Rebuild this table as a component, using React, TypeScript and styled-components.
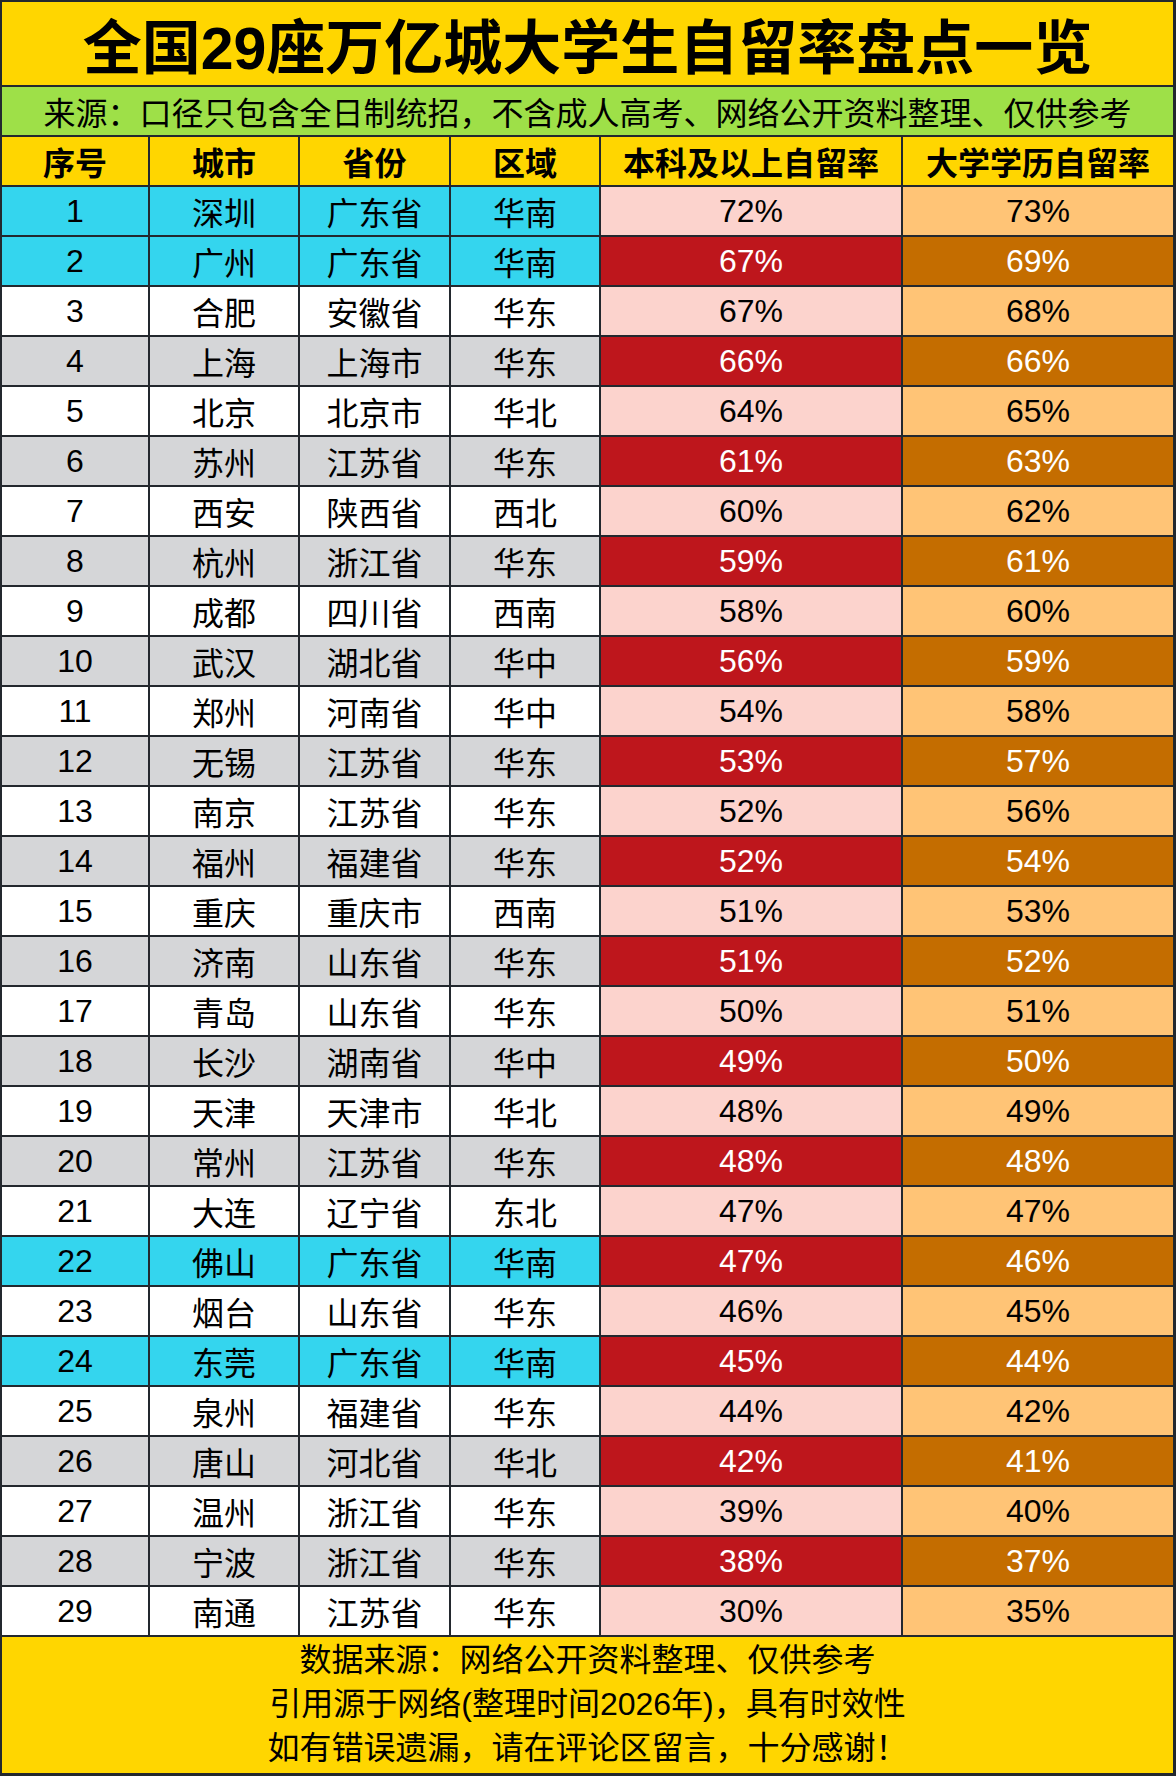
import React from "react";
import styled, { createGlobalStyle } from "styled-components";

const Global = createGlobalStyle`
  html, body { margin: 0; padding: 0; background: #ffffff; }
  body { font-family: "Liberation Sans", "Noto Sans CJK SC", sans-serif; }
`;

const LINE = "#23282e";

const Sheet = styled.div`
  width: 1176px;
  height: 1776px;
  box-sizing: border-box;
  background: ${LINE};
  padding: 2px 3px 3px 2px;
  display: grid;
  grid-template-columns: 146px 148px 149px 148px 300px 1fr;
  grid-template-rows: 83px 48px 48px repeat(29, 48px) 136px;
  column-gap: 2px;
  row-gap: 2px;
  font-family: "Liberation Sans", "Noto Sans CJK SC", sans-serif;
`;

const Title = styled.div`
  grid-column: 1 / -1;
  background: #ffd600;
  display: flex;
  align-items: center;
  justify-content: center;
  font-size: 59px;
  font-weight: 700;
  color: #000;
`;

const Subtitle = styled.div`
  grid-column: 1 / -1;
  background: #9ee048;
  display: flex;
  align-items: center;
  justify-content: center;
  font-size: 32px;
  color: #000;
`;

const Head = styled.div`
  background: #ffd600;
  display: flex;
  align-items: center;
  justify-content: center;
  font-size: 32px;
  font-weight: 700;
  color: #000;
`;

type Tone = "white" | "grey" | "cyan" | "pink" | "red" | "lorange" | "dorange";

const toneBg: Record<Tone, string> = {
  white: "#ffffff",
  grey: "#d5d6d8",
  cyan: "#34d5ee",
  pink: "#fcd3cd",
  red: "#be161c",
  lorange: "#ffc476",
  dorange: "#c46d00",
};

const Cell = styled.div<{ $tone: Tone }>`
  background: ${(p) => toneBg[p.$tone]};
  color: ${(p) => (p.$tone === "red" || p.$tone === "dorange" ? "#ffffff" : "#000000")};
  display: flex;
  align-items: center;
  justify-content: center;
  font-size: 32px;
`;

const Footer = styled.div`
  grid-column: 1 / -1;
  background: #ffd600;
  display: flex;
  flex-direction: column;
  align-items: center;
  justify-content: center;
  font-size: 32px;
  line-height: 44px;
  color: #000;
  padding-bottom: 2px;
`;

type Row = [string, string, string, string, string];

const rows: Row[] = [
  ["深圳", "广东省", "华南", "72%", "73%"],
  ["广州", "广东省", "华南", "67%", "69%"],
  ["合肥", "安徽省", "华东", "67%", "68%"],
  ["上海", "上海市", "华东", "66%", "66%"],
  ["北京", "北京市", "华北", "64%", "65%"],
  ["苏州", "江苏省", "华东", "61%", "63%"],
  ["西安", "陕西省", "西北", "60%", "62%"],
  ["杭州", "浙江省", "华东", "59%", "61%"],
  ["成都", "四川省", "西南", "58%", "60%"],
  ["武汉", "湖北省", "华中", "56%", "59%"],
  ["郑州", "河南省", "华中", "54%", "58%"],
  ["无锡", "江苏省", "华东", "53%", "57%"],
  ["南京", "江苏省", "华东", "52%", "56%"],
  ["福州", "福建省", "华东", "52%", "54%"],
  ["重庆", "重庆市", "西南", "51%", "53%"],
  ["济南", "山东省", "华东", "51%", "52%"],
  ["青岛", "山东省", "华东", "50%", "51%"],
  ["长沙", "湖南省", "华中", "49%", "50%"],
  ["天津", "天津市", "华北", "48%", "49%"],
  ["常州", "江苏省", "华东", "48%", "48%"],
  ["大连", "辽宁省", "东北", "47%", "47%"],
  ["佛山", "广东省", "华南", "47%", "46%"],
  ["烟台", "山东省", "华东", "46%", "45%"],
  ["东莞", "广东省", "华南", "45%", "44%"],
  ["泉州", "福建省", "华东", "44%", "42%"],
  ["唐山", "河北省", "华北", "42%", "41%"],
  ["温州", "浙江省", "华东", "39%", "40%"],
  ["宁波", "浙江省", "华东", "38%", "37%"],
  ["南通", "江苏省", "华东", "30%", "35%"],
];

const heads = ["序号", "城市", "省份", "区域", "本科及以上自留率", "大学学历自留率"];

export default function App() {
  return (
    <>
      <Global />
      <Sheet>
        <Title>全国29座万亿城大学生自留率盘点一览</Title>
        <Subtitle>来源：口径只包含全日制统招，不含成人高考、网络公开资料整理、仅供参考</Subtitle>
        {heads.map((h) => (
          <Head key={h}>{h}</Head>
        ))}
        {rows.map((r, i) => {
          const even = i % 2 === 1;
          const gd = r[1] === "广东省";
          const base: Tone = gd ? "cyan" : even ? "grey" : "white";
          const a: Tone = even ? "red" : "pink";
          const b: Tone = even ? "dorange" : "lorange";
          return (
            <React.Fragment key={i}>
              <Cell $tone={base}>{i + 1}</Cell>
              <Cell $tone={base}>{r[0]}</Cell>
              <Cell $tone={base}>{r[1]}</Cell>
              <Cell $tone={base}>{r[2]}</Cell>
              <Cell $tone={a}>{r[3]}</Cell>
              <Cell $tone={b}>{r[4]}</Cell>
            </React.Fragment>
          );
        })}
        <Footer>
          <div>数据来源：网络公开资料整理、仅供参考</div>
          <div>引用源于网络(整理时间2026年)，具有时效性</div>
          <div>如有错误遗漏，请在评论区留言，十分感谢！</div>
        </Footer>
      </Sheet>
    </>
  );
}
